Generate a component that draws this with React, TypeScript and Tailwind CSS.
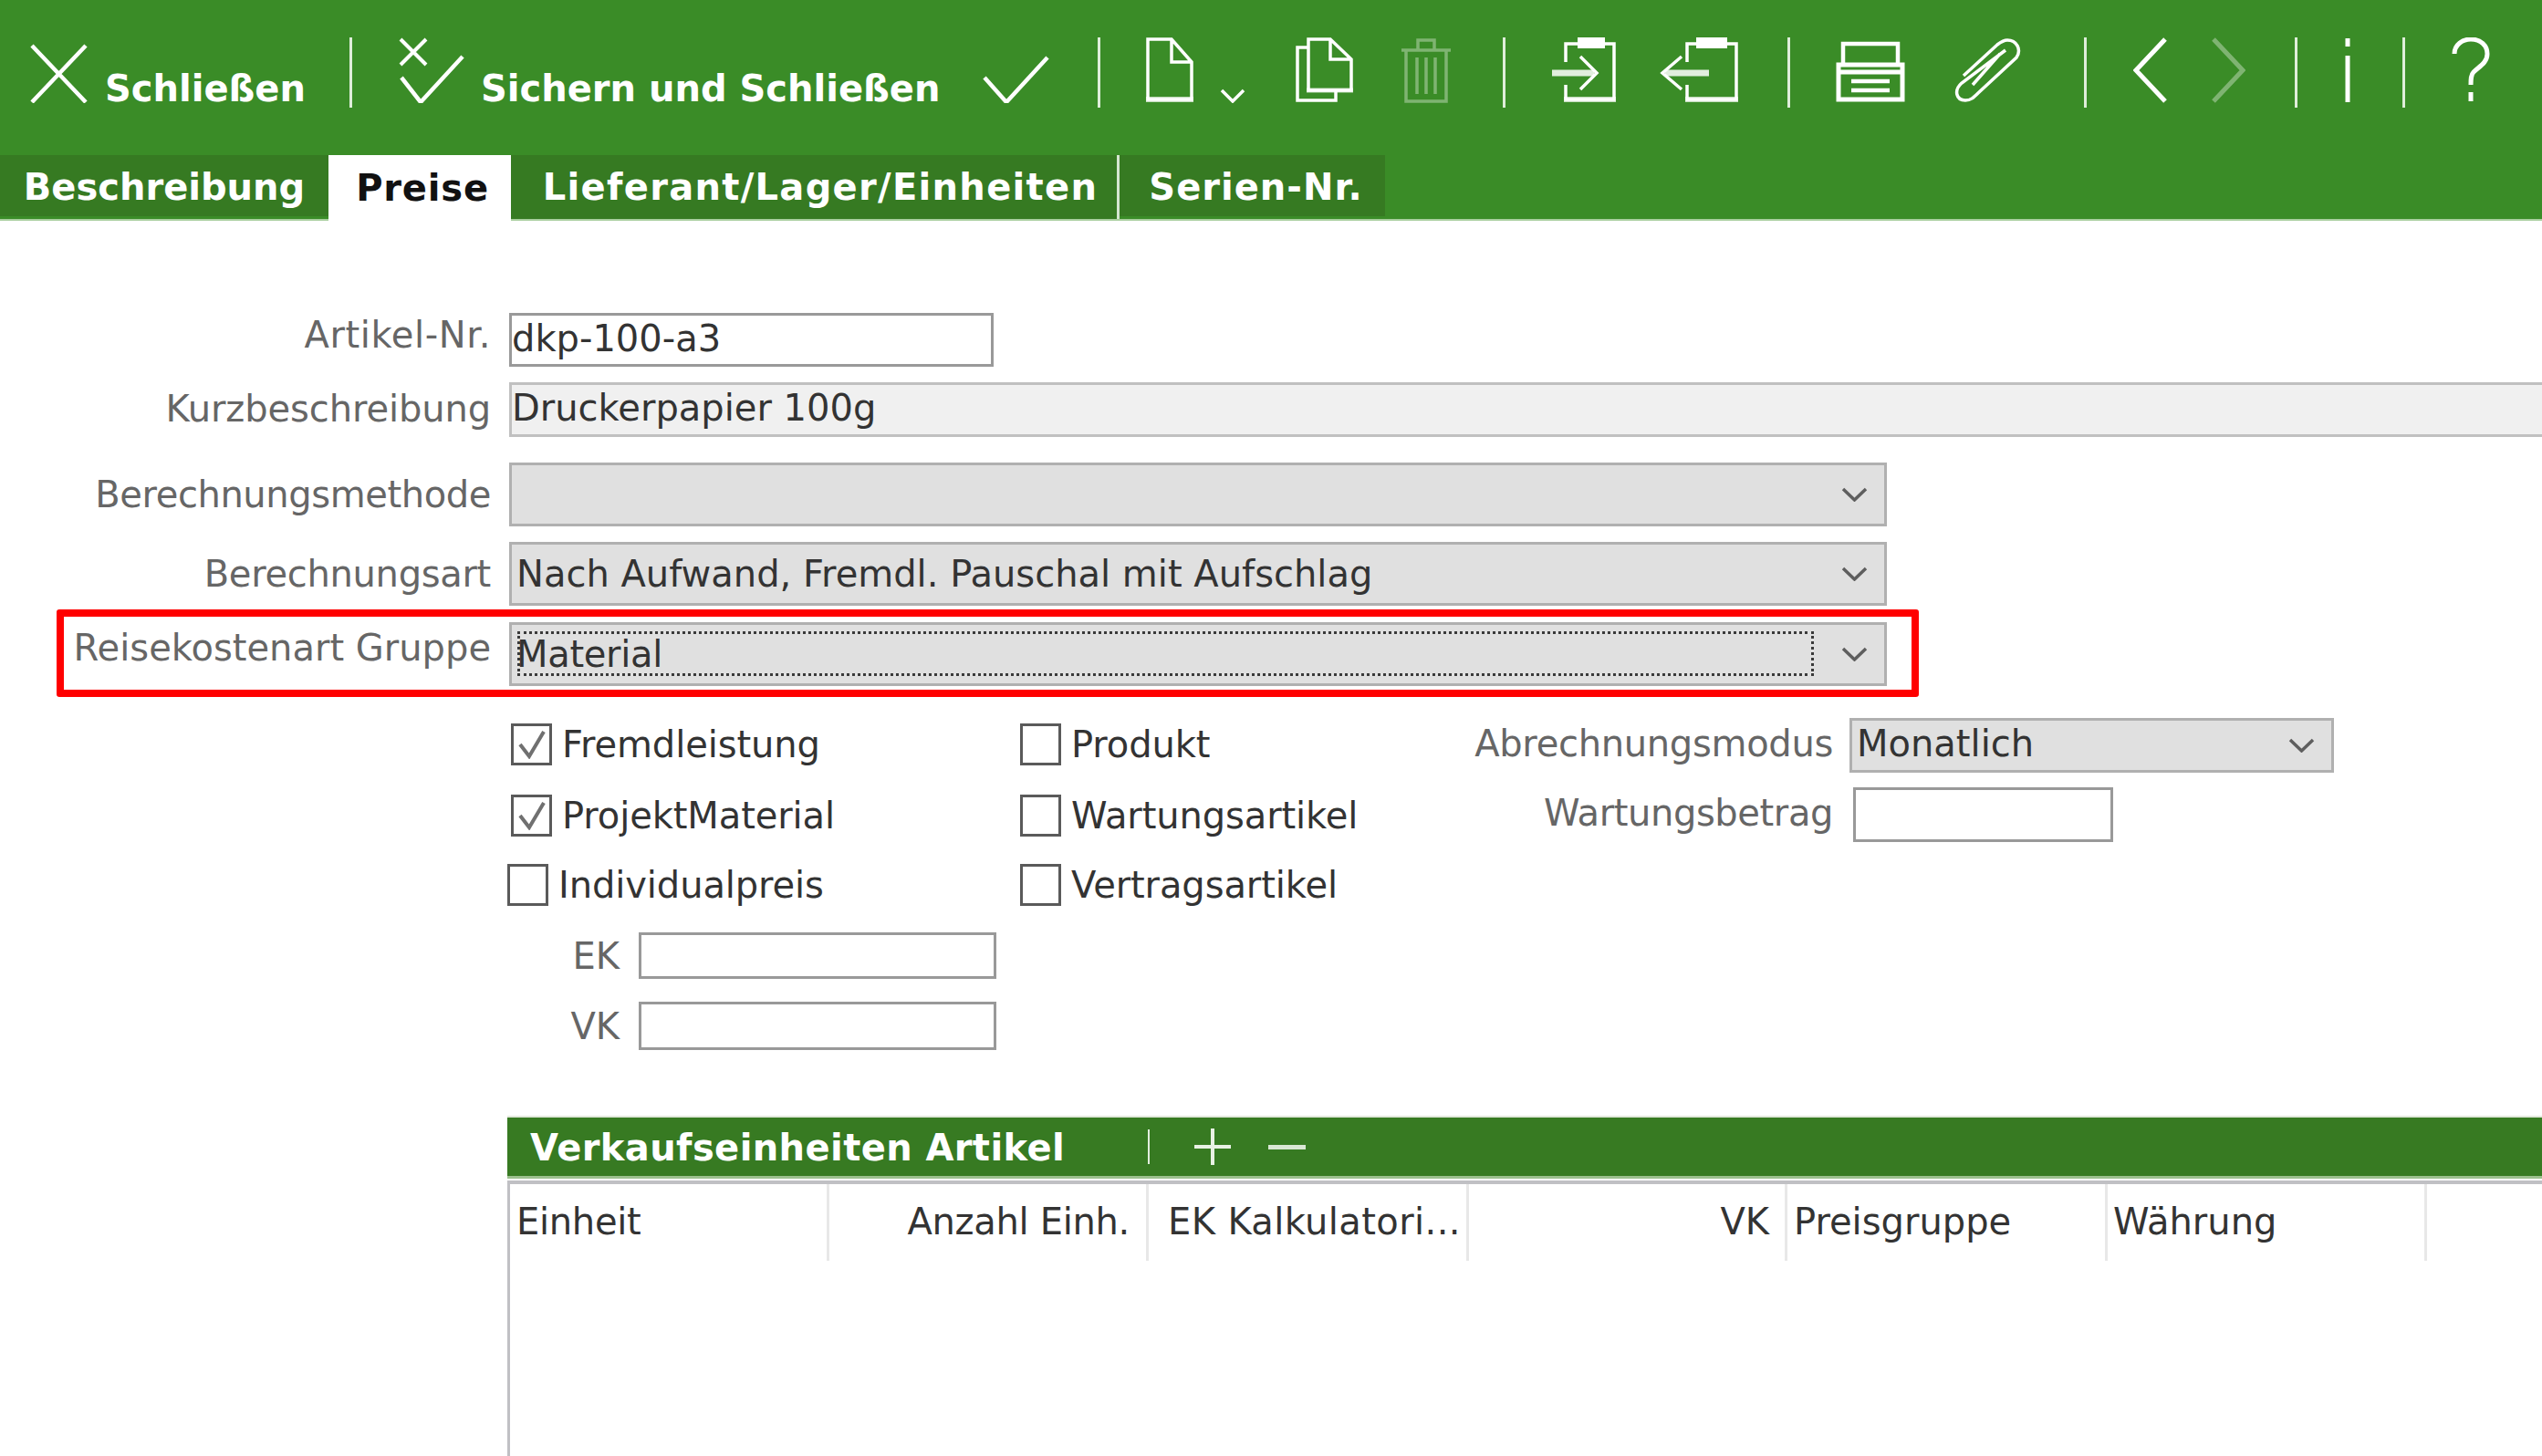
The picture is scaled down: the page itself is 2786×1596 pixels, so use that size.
import React from "react";

const Sep = ({ ml }: { ml: string }) => <div className={`${ml} w-[3px] h-[77px] bg-[#dfeeda] shrink-0`} />;

const Chevron = () => (
  <svg viewBox="0 0 29 16" className="w-[29px] h-[16px] shrink-0" fill="none" stroke="#5e5e5e" strokeWidth="3.5">
    <path d="M2 2 L14.5 14 L27 2" />
  </svg>
);

const Ic = ({ className, w, h, children, op }: { className: string; w: number; h: number; children: React.ReactNode; op?: boolean }) => (
  <svg
    viewBox={`0 0 ${w} ${h}`}
    className={`${className} shrink-0 ${op ? "opacity-35" : ""}`}
    fill="none"
    stroke="#ffffff"
    strokeWidth="3.5"
  >
    {children}
  </svg>
);

const Label = ({ children, className = "" }: { children: React.ReactNode; className?: string }) => (
  <div className={`shrink-0 text-[#666666] text-[40px] leading-[46px] whitespace-nowrap text-right ${className}`}>{children}</div>
);

const SelectBox = ({ value, className = "", focus = false }: { value: string; className?: string; focus?: boolean }) => (
  <div className={`relative shrink-0 flex items-center justify-between h-[70px] bg-[#e0e0e0] border-[3px] border-[#b0b0b0] pl-[5px] pr-[18px] text-[#333333] text-[40px] whitespace-nowrap ${className}`}>
    <span>{value}</span>
    <Chevron />
    {focus && <div className="absolute left-[6px] top-[7px] w-[1421px] h-[49px] border-[3px] border-dotted border-[#3a3a3a]" />}
  </div>
);

const Check = ({ label, checked = false, className = "" }: { label: string; checked?: boolean; className?: string }) => (
  <div className={`flex items-center h-[46px] ${className}`}>
    <div className="w-[45px] h-[46px] border-[3px] border-[#5a5a5a] bg-white shrink-0 flex items-center justify-center">
      {checked && (
        <svg viewBox="0 0 30 32" className="w-[30px] h-[32px]" fill="none" stroke="#707070" strokeWidth="4">
          <path d="M2 16 L12 29 L28 2" />
        </svg>
      )}
    </div>
    <span className="ml-[11px] text-[#333333] text-[40px] leading-[46px] tracking-[-0.1px] whitespace-nowrap">{label}</span>
  </div>
);

const Input = ({ className }: { className: string }) => <div className={`border-[3px] border-[#999999] bg-white ${className}`} />;

const Tab = ({ children, className }: { children: React.ReactNode; className: string }) => (
  <div className={`h-[67px] flex items-center justify-center bg-[#367a22] text-white font-bold text-[40px] whitespace-nowrap ${className}`}>{children}</div>
);

const Col = ({ children, className }: { children?: React.ReactNode; className: string }) => (
  <div className={`h-[84px] pt-[18px] text-[#333333] text-[40px] leading-[46px] whitespace-nowrap border-r-[3px] border-[#e8e8e8] shrink-0 ${className}`}>{children}</div>
);

export default function App() {
  return (
    <div className="w-[2786px] h-[1596px] overflow-hidden bg-white" style={{ fontFamily: '"DejaVu Sans", "Liberation Sans", sans-serif' }}>
      {/* Toolbar */}
      <div className="bg-[#3a8c27] h-[242px] border-b-[2px] border-[#a9cf9f] flex flex-col">
        <div className="h-[170px] pt-[41px] flex items-start text-white font-bold text-[40px] leading-[38px] whitespace-nowrap">
          <Ic className="ml-[33px] w-[63px] h-[72px]" w={63} h={72}>
            <path d="M2 9 L61 71 M61 9 L2 71" strokeWidth="4.5" />
          </Ic>
          <span className="ml-[19px] mt-[37px] w-[220px]">Schließen</span>
          <Sep ml="ml-[48px]" />
          <Ic className="ml-[51px] w-[72px] h-[72px]" w={72} h={72}>
            <path d="M2 2 L30 30 M30 2 L2 30" strokeWidth="4" />
            <path d="M3 44 L24 71 L70 21" strokeWidth="4.5" />
          </Ic>
          <span className="ml-[18px] mt-[37px] w-[504px]">Sichern und Schließen</span>
          <Ic className="ml-[46px] w-[73px] h-[72px]" w={73} h={72}>
            <path d="M2 44 L26 71 L71 22" strokeWidth="4.5" />
          </Ic>
          <Sep ml="ml-[53px]" />
          <Ic className="ml-[50px] w-[52px] h-[72px]" w={52} h={72}>
            <path d="M2 2 H28 L50 27 V68 H2 Z M28 2 V27 H50" />
            <path d="M0 68 H52" strokeWidth="6" opacity="0.7" />
          </Ic>
          <Ic className="ml-[29px] mt-[56px] w-[28px] h-[16px]" w={28} h={16}>
            <path d="M2 2 L14 14 L26 2" />
          </Ic>
          <Ic className="ml-[55px] w-[63px] h-[72px]" w={63} h={72}>
            <path d="M14 2 H38 L61 24 V58 H14 Z M38 2 V24 H61 M14 11 H2 V69 H44 V58" />
            <path d="M12 58 H63" strokeWidth="5" opacity="0.7" />
          </Ic>
          <Ic className="ml-[51px] w-[58px] h-[72px]" w={58} h={72} op>
            <path d="M2 14 H56 M20 14 V3 H38 V14 M7 14 V70 H51 V14 M19 22 V62 M29 22 V62 M39 22 V62" />
          </Ic>
          <Sep ml="ml-[55px]" />
          <Ic className="ml-[51px] w-[70px] h-[72px]" w={70} h={72}>
            <path d="M15 27 V7 H28 M58 7 H68 V68 H15 V52" />
            <rect x="28" y="0" width="30" height="12" fill="#ffffff" stroke="none" />
            <path d="M0 39 H46" strokeWidth="7" opacity="0.85" />
            <path d="M31 21 L49 39 L31 57" />
            <path d="M13 68 H70" strokeWidth="6" opacity="0.7" />
          </Ic>
          <Ic className="ml-[48px] w-[86px] h-[72px]" w={86} h={72}>
            <path d="M30 27 V7 H40 M74 7 H84 V68 H30 V52" />
            <rect x="40" y="0" width="34" height="12" fill="#ffffff" stroke="none" />
            <path d="M6 39 H54" strokeWidth="7" opacity="0.85" />
            <path d="M24 21 L3 39 L24 57" />
            <path d="M28 68 H86" strokeWidth="6" opacity="0.7" />
          </Ic>
          <Sep ml="ml-[54px]" />
          <Ic className="ml-[50px] w-[76px] h-[72px]" w={76} h={72}>
            <path d="M8 28 V7 H68 V28" strokeWidth="4.5" />
            <path d="M3 30 H73 V68 H3 Z M3 38 H73" strokeWidth="5" />
            <path d="M17 48 H59 M17 58 H59" strokeWidth="4.5" />
          </Ic>
          <Ic className="ml-[48px] w-[80px] h-[72px]" w={80} h={72}>
            <path d="M62 14 L14 50 C5 58 8 69 18 69 C24 69 27 66 32 61 L74 22 C80 13 74 3 64 3 C60 3 57 5 53 8 L16 42 M56 18 L26 52" />
          </Ic>
          <Sep ml="ml-[68px]" />
          <Ic className="ml-[51px] w-[37px] h-[72px]" w={37} h={72}>
            <path d="M35 2 L3 36 L35 70" strokeWidth="5" />
          </Ic>
          <Ic className="ml-[49px] w-[37px] h-[72px]" w={37} h={72} op>
            <path d="M2 2 L34 36 L2 70" strokeWidth="5" />
          </Ic>
          <Sep ml="ml-[54px]" />
          <Ic className="ml-[48px] w-[14px] h-[72px]" w={14} h={72}>
            <path d="M7 1 V10 M7 20 V71" strokeWidth="5" />
          </Ic>
          <Sep ml="ml-[53px]" />
          <Ic className="ml-[51px] w-[42px] h-[72px]" w={42} h={72}>
            <path d="M3 18 C3 8 12 2 21 2 C32 2 39 9 39 18 C39 28 30 32 24 38 C21 41 21 46 21 52 M21 60 V70" strokeWidth="5" />
          </Ic>
        </div>
        <div className="flex items-start h-[70px]">
          <Tab className="w-[360px] pt-[3px]">Beschreibung</Tab>
          <div className="w-[200px] h-[72px] bg-white text-[#111111] font-bold text-[40px] tracking-[0.8px] pl-[6px] flex items-center justify-center relative z-10">Preise</div>
          <Tab className="w-[667px] border-r-[3px] border-[#d5e6d0] !h-[70px] tracking-[1.3px] pl-[14px]">Lieferant/Lager/Einheiten</Tab>
          <Tab className="w-[291px] pt-[3px] pl-[8px] tracking-[1px]">Serien-Nr.</Tab>
        </div>
      </div>

      {/* Form */}
      <div className="flex flex-col">
        <div className="flex items-center mt-[101px] h-[59px]">
          <Label className="w-[538px] mr-[20px] pb-[12px] tracking-[0.6px]">Artikel-Nr.</Label>
          <div className="w-[531px] h-[59px] border-[3px] border-[#999999] bg-white text-[#333333] text-[40px] leading-[50px]">dkp-100-a3</div>
        </div>
        <div className="flex items-center mt-[17px] h-[60px]">
          <Label className="w-[538px] mr-[20px] pb-[2px] tracking-[-0.1px]">Kurzbeschreibung</Label>
          <div className="w-[2300px] shrink-0 h-[60px] border-[3px] border-[#c0c0c0] bg-[#f0f0f0] text-[#333333] text-[40px] leading-[50px]">Druckerpapier 100g</div>
        </div>
        <div className="flex items-center mt-[28px]">
          <Label className="w-[538px] mr-[20px] tracking-[-0.4px]">Berechnungsmethode</Label>
          <SelectBox value="" className="w-[1510px]" />
        </div>
        <div className="flex items-center mt-[17px]">
          <Label className="w-[538px] mr-[20px] tracking-[-0.3px]">Berechnungsart</Label>
          <SelectBox value="Nach Aufwand, Fremdl. Pauschal mit Aufschlag" className="w-[1510px]" />
        </div>
        <div className="relative flex items-center mt-[18px]">
          <Label className="w-[538px] mr-[20px] pb-[14px]">Reisekostenart Gruppe</Label>
          <SelectBox value="Material" className="w-[1510px] tracking-[-0.3px]" focus />
          <div className="absolute left-[62px] top-[-14px] w-[2041px] h-[96px] border-[8px] border-[#ff0000] rounded-[3px]" />
        </div>

        {/* Options */}
        <div className="flex items-start mt-[35px] ml-[556px]">
          <div className="w-[562px] pt-[6px] flex flex-col">
            <Check label="Fremdleistung" checked className="ml-[4px]" />
            <Check label="ProjektMaterial" checked className="ml-[4px] mt-[32px]" />
            <Check label="Individualpreis" className="mt-[30px]" />
            <div className="flex items-center mt-[29px]">
              <Label className="w-[123px]">EK</Label>
              <Input className="ml-[21px] w-[392px] h-[51px]" />
            </div>
            <div className="flex items-center mt-[25px]">
              <Label className="w-[123px]">VK</Label>
              <Input className="ml-[21px] w-[392px] h-[53px]" />
            </div>
          </div>
          <div className="w-[400px] pt-[6px] flex flex-col">
            <Check label="Produkt" />
            <Check label="Wartungsartikel" className="mt-[32px]" />
            <Check label="Vertragsartikel" className="mt-[30px]" />
          </div>
          <div className="flex flex-col">
            <div className="flex items-center">
              <Label className="w-[491px] mr-[18px] pb-[4px] tracking-[-0.3px]">Abrechnungsmodus</Label>
              <SelectBox value="Monatlich" className="w-[531px] !h-[60px] [&>span]:pb-[4px]" />
            </div>
            <div className="flex items-center mt-[16px]">
              <Label className="w-[491px] mr-[22px] pb-[4px] tracking-[-0.4px]">Wartungsbetrag</Label>
              <Input className="w-[285px] h-[60px]" />
            </div>
          </div>
        </div>

        {/* Section */}
        <div className="ml-[556px] mt-[72px] h-[69px] bg-[#377a22] border-t-[2px] border-b-[3px] border-t-[#e2e8dc] border-b-[#9cc08e] flex items-center text-white">
          <span className="ml-[25px] w-[677px] font-bold text-[40px] tracking-[0.4px] leading-[46px] whitespace-nowrap pt-[2px]">Verkaufseinheiten Artikel</span>
          <div className="w-[2px] h-[38px] bg-[#e3eedf]" />
          <svg viewBox="0 0 40 40" className="ml-[49px] w-[40px] h-[40px]" fill="none" stroke="#e8f1e4" strokeWidth="4">
            <path d="M0 20 H40 M20 0 V40" />
          </svg>
          <div className="ml-[41px] w-[41px] h-[5px] bg-[#d9e7d4]" />
        </div>
        <div className="ml-[556px] mt-[2px] h-[310px] border-t-[4px] border-l-[3px] border-[#c0c0c4] flex">
          <Col className="w-[350px] pl-[7px] tracking-[-0.3px]">Einheit</Col>
          <Col className="w-[350px] pr-[18px] text-right tracking-[-0.3px]">Anzahl Einh.</Col>
          <Col className="w-[351px] pl-[21px] tracking-[0.4px] overflow-hidden">EK Kalkulatori...</Col>
          <Col className="w-[349px] pr-[17px] text-right">VK</Col>
          <Col className="w-[351px] pl-[7px]">Preisgruppe</Col>
          <Col className="w-[350px] pl-[6px]">Währung</Col>
        </div>
      </div>
    </div>
  );
}
